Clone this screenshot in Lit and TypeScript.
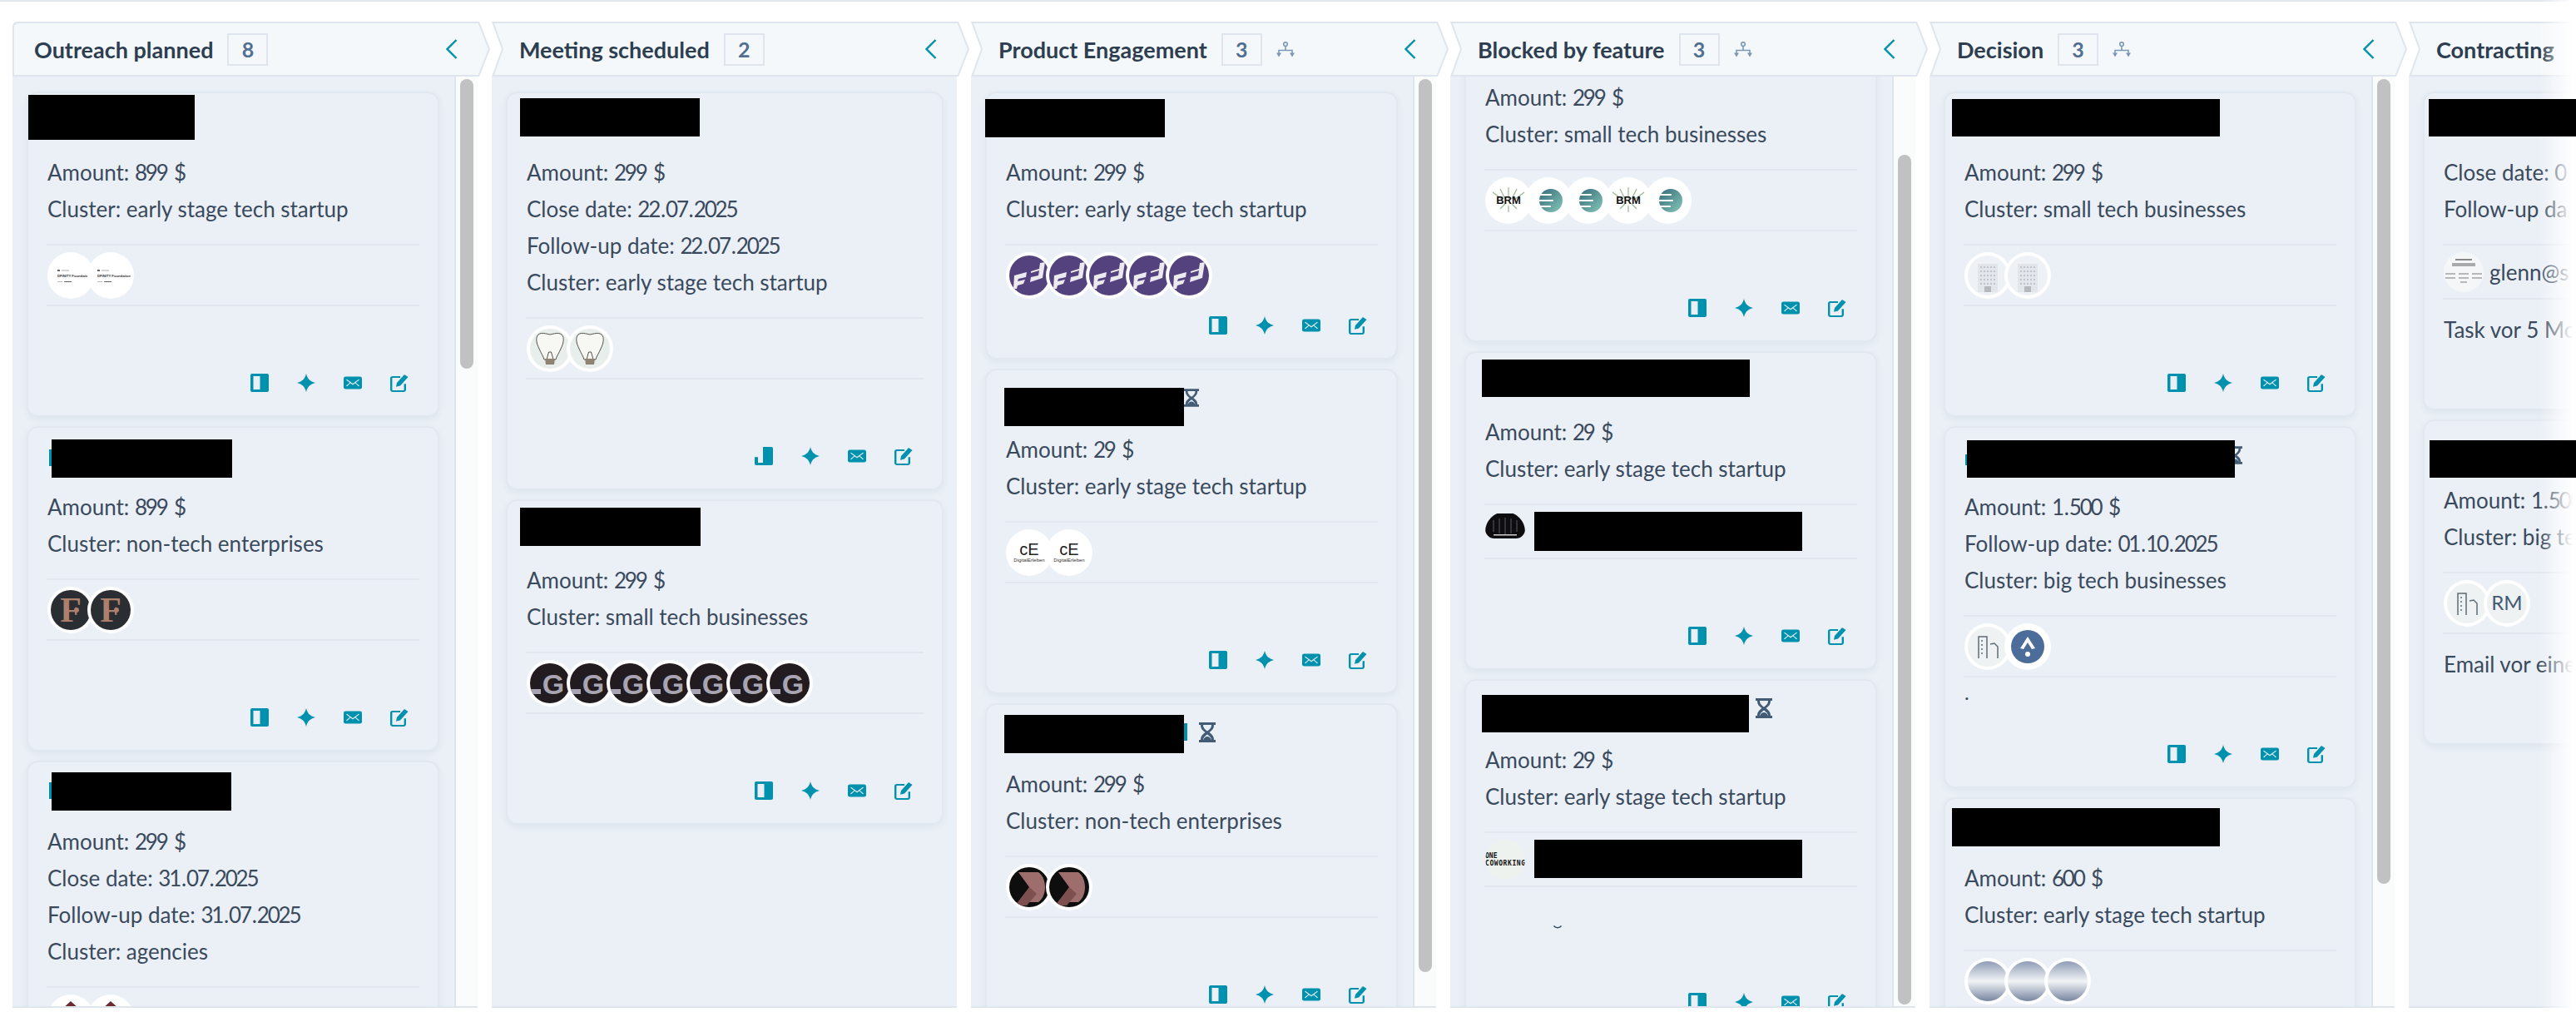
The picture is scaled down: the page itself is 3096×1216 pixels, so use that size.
import { LitElement, html, css, svg, TemplateResult } from "lit";
import { customElement } from "lit/decorators.js";

type Box = { x: number; y: number; w: number; h: number };
type Card = {
  name: Box;
  sliver?: Box;
  glass?: Box;
  lines: string[];
  logos: string[];
  small?: boolean;
  contact?: string;
  cover?: Box;
  compact?: boolean;
  note?: string;
  dot?: boolean;
  mark?: boolean;
  jIcon?: boolean;
};
type Col = {
  title: string;
  count: number;
  hier?: boolean;
  first?: boolean;
  thumb?: { top: number; h: number };
  shift?: number;
  cards: Card[];
};

const logo = (k: string): TemplateResult => {
  const g: Record<string, unknown> = {
    dfinity: svg`<rect width="48" height="48" fill="#fff"/><rect x="8" y="17" width="3" height="2" fill="#666"/><rect x="13" y="17.5" width="9" height="1" fill="#aaa"/><text x="8" y="26" font-size="4.2" font-weight="700" font-family="Liberation Sans" fill="#333">DFINITY Foundation</text><rect x="8" y="31" width="6" height="1" fill="#bbb"/><rect x="16" y="31" width="9" height="1" fill="#666"/>`,
    tooth: svg`<rect width="48" height="48" fill="#e8eeec"/><path d="M10 7c4-3 9-1 14 0 5-1 10-3 14 0 4 4 2 11-1 17-2 5-5 9-6 13H17c-1-4-4-8-6-13C8 18 6 11 10 7z" fill="#f7f7f3" stroke="#55524c" stroke-width="1"/><path d="M20 37l2.500-9h3L28 37" fill="#f7f7f3" stroke="#55524c" stroke-width="1"/><path d="M18 36h12l-1 7H19z" fill="#8f8373"/>`,
    purple: svg`<rect width="48" height="48" fill="#54427f"/><path d="M6 24l15-4-1 6-9 2-1 3 9-2-2 5-7 2-1 4H5z M26 19l10-3 1-7 6-1-3 19-15 5 1-6 9-2 1-6-10 3z" fill="#ece9ef"/>`,
    ff: svg`<rect width="48" height="48" fill="#2a2d31"/><text x="24" y="38" text-anchor="middle" font-size="42" font-weight="700" font-family="Liberation Serif" fill="#ad7f6c">F</text><circle cx="31" cy="24" r="3" fill="#ad7f6c"/>`,
    g: svg`<rect width="48" height="48" fill="#221b20"/><rect x="1" y="31" width="12" height="6" fill="#a9a4b1"/><text x="28" y="37" text-anchor="middle" font-size="34" font-weight="700" font-family="Liberation Sans" fill="#a9a4b1">G</text>`,
    chevron: svg`<rect width="48" height="48" fill="#0e0e0e"/><path d="M11 6h24c6 4 8 12 8 18s-2 14-8 18H13l11-18z" fill="#9d6e6c"/><path d="M24 24L7 46h14l12-14z" fill="#7d504f"/>`,
    brm: svg`<rect width="48" height="48" fill="#fff"/><path d="M24 8v14M14 10l6 12M34 10l-6 12M5 14l12 9M43 14l-12 9M14 34l6-6M34 34l-6-6M24 38v-8" stroke="#97b98d" stroke-width="1.2"/><text x="24" y="28" text-anchor="middle" font-size="13" font-weight="700" font-family="Liberation Sans" fill="#111">BRM</text>`,
    ball: svg`<defs><linearGradient id="tb" x1="0" x2="1" y1="0" y2="1"><stop offset="0" stop-color="#35697a"/><stop offset="1" stop-color="#86c8b8"/></linearGradient></defs><rect width="48" height="48" fill="#fff"/><circle cx="27" cy="24" r="14" fill="url(#tb)"/><path d="M11 17h16M9 24h20M12 31h14" stroke="#fff" stroke-width="2.2" stroke-linecap="round"/>`,
    office: svg`<rect width="48" height="48" fill="#eef1f5"/><rect x="12" y="10" width="24" height="34" fill="#e2e6ea"/><path d="M15 14h18M15 19h18M15 24h18M15 29h18M15 34h18" stroke="#bfc5cc" stroke-width="1.8" stroke-dasharray="2 2"/><rect x="20" y="37" width="8" height="7" fill="#b4b9bf"/>`,
    de: svg`<rect width="48" height="48" fill="#fff"/><text x="24" y="27" text-anchor="middle" font-size="20" font-family="Liberation Sans" fill="#222">cE</text><text x="24" y="35" text-anchor="middle" font-size="6" font-family="Liberation Sans" fill="#333">DigitalErleben</text>`,
    outline: svg`<rect width="48" height="48" fill="#eef2f2"/><path d="M13 38V12h10v26M16 17h2M16 22h2M16 27h2M16 32h2M27 21l5-1 4 4v14" fill="none" stroke="#5f6b76" stroke-width="1.5"/>`,
    rm: svg`<rect width="48" height="48" fill="#eef2f2"/><text x="24" y="32" text-anchor="middle" font-size="24" font-family="Lato" fill="#425b76">RM</text>`,
    blue: svg`<rect width="48" height="48" fill="#fff"/><circle cx="24" cy="24" r="20" fill="#4c6c9a"/><path d="M15 26l9-14 9 14-4 1-5-8-5 8z" fill="#fff"/><circle cx="24" cy="33" r="3" fill="#fff"/>`,
    silver: svg`<defs><linearGradient id="sb" x1="0" x2="0" y1="0" y2="1"><stop offset="0" stop-color="#8e9cb4"/><stop offset=".5" stop-color="#f2f4f7"/><stop offset="1" stop-color="#76859f"/></linearGradient></defs><rect width="48" height="48" fill="url(#sb)"/>`,
    house: svg`<rect width="48" height="48" fill="#fff"/><path d="M4 22L24 4l20 18-5 3L24 11 9 25z" fill="#6b2a30"/>`,
    one: svg`<rect width="48" height="48" fill="#eef2ee"/><text x="0" y="22" font-size="8" font-weight="700" font-family="DejaVu Sans Mono" fill="#111">ONE</text><text x="0" y="31" font-size="8" font-weight="700" font-family="DejaVu Sans Mono" fill="#111" textLength="48">COWORKING</text>`,
    dark: svg`<rect x="0" y="2" width="48" height="30" rx="11" fill="#0d0d10"/><path d="M10 10v14M17 8v18M24 7v20M31 8v18M38 10v14" stroke="#33333b" stroke-width="2"/><rect x="10" y="27" width="28" height="1.5" fill="#cfcfcf"/>`,
    doc: svg`<rect width="48" height="48" fill="#f4f6f8"/><rect x="14" y="8" width="20" height="2" fill="#888"/><rect x="10" y="13" width="28" height="4" fill="#aaa"/><path d="M2 26h12M18 26h12M34 26h12M2 31h12M18 31h12M34 31h12M20 36h8" stroke="#b8b8b8" stroke-width="2"/>`,
  };
  return html`<svg viewBox="0 0 48 48" class="logo">${g[k]}</svg>`;
};

const ic = {
  panel: html`<svg viewBox="0 0 22 25" preserveAspectRatio="none" class="ic"><path fill-rule="evenodd" d="M2 0h18a2 2 0 0 1 2 2v21a2 2 0 0 1-2 2H2a2 2 0 0 1-2-2V2a2 2 0 0 1 2-2zm1.500 3.500v18h8v-18z"/></svg>`,
  j: html`<svg viewBox="0 0 22 25" preserveAspectRatio="none" class="ic"><path d="M10 0h10a2 2 0 0 1 2 2v21a2 2 0 0 1-2 2H2a2 2 0 0 1-2-2v-9h4v7.500h6z"/></svg>`,
  star: html`<svg viewBox="0 0 22 25" preserveAspectRatio="none" class="ic"><path d="M11 0c1.500 7 4.500 10.500 11 12.500-6.500 2-9.500 5.500-11 12.500-1.500-7-4.500-10.500-11-12.500C6.500 10.500 9.500 7 11 0z"/></svg>`,
  mail: html`<svg viewBox="0 0 22 25" preserveAspectRatio="none" class="ic"><rect x="0" y="4" width="22" height="17" rx="2.500"/><path d="M3.500 8l7.500 6.500 7.500-6.500M3.500 17l4.500-4.500M18.500 17L14 12.500" fill="none" stroke="#eaf0f6" stroke-width="1.200"/></svg>`,
  edit: html`<svg viewBox="0 0 22 25" preserveAspectRatio="none" class="ic"><path d="M12 4.500H3a1.800 1.800 0 0 0-1.800 1.800V22A1.800 1.800 0 0 0 3 23.800h13a1.800 1.800 0 0 0 1.800-1.800v-8" fill="none" stroke="#0091ae" stroke-width="2.400"/><path d="M8 12.500L17 1l4.500 3.500-9.500 12-5 1.500z"/></svg>`,
};

const glassIcon = html`<svg viewBox="0 0 20 24" class="glass"><path d="M0 0h20v3h-2c0 5-3 7-5.500 9 2.500 2 5.500 4 5.500 9h2v3H0v-3h2c0-5 3-7 5.500-9C5 10 2 8 2 3H0zm5 3c0 4 3 6 5 7.500C12 9 15 7 15 3zm5 11.500C8 16 5 18 5 21h10c0-3-3-5-5-6.500z"/><path d="M5 21.500c.5-3 3-4.500 5-4.500s4.500 1.500 5 4.500z"/></svg>`;

const hierIcon = html`<svg viewBox="0 0 22 19" class="hier"><circle cx="11" cy="3" r="2.300" fill="none" stroke="#7c98b6" stroke-width="1.600"/><path d="M11 5.500v5M3 15v-4.500h16V15" fill="none" stroke="#7c98b6" stroke-width="1.600"/><path d="M0 13.500h6L3 18.500zM16 13.500h6l-3 5z" fill="#7c98b6"/></svg>`;

const rep = (k: string, n: number) => Array(n).fill(k) as string[];

const COLS: Col[] = [
  {
    title: "Outreach planned", count: 8, first: true, thumb: { top: 3, h: 348 },
    cards: [
      { name: { x: -23, y: 2, w: 200, h: 54 }, lines: ["Amount: 899 $", "Cluster: early stage tech startup"], logos: rep("dfinity", 2) },
      { name: { x: 5, y: 14, w: 217, h: 46 }, sliver: { x: 2, y: 26, w: 3, h: 20 }, lines: ["Amount: 899 $", "Cluster: non-tech enterprises"], logos: rep("ff", 2) },
      { name: { x: 5, y: 12, w: 216, h: 46 }, sliver: { x: 2, y: 24, w: 3, h: 20 }, lines: ["Amount: 299 $", "Close date: 31.07.2025", "Follow-up date: 31.07.2025", "Cluster: agencies"], logos: rep("house", 2) },
    ],
  },
  {
    title: "Meeting scheduled", count: 2,
    cards: [
      { name: { x: -8, y: 6, w: 216, h: 46 }, lines: ["Amount: 299 $", "Close date: 22.07.2025", "Follow-up date: 22.07.2025", "Cluster: early stage tech startup"], logos: rep("tooth", 2), jIcon: true },
      { name: { x: -8, y: 8, w: 217, h: 46 }, lines: ["Amount: 299 $", "Cluster: small tech businesses"], logos: rep("g", 7) },
    ],
  },
  {
    title: "Product Engagement", count: 3, hier: true, thumb: { top: 3, h: 1073 },
    cards: [
      { name: { x: -25, y: 7, w: 216, h: 46 }, lines: ["Amount: 299 $", "Cluster: early stage tech startup"], logos: rep("purple", 5), compact: true },
      { name: { x: -2, y: 21, w: 216, h: 46 }, glass: { x: 214, y: 21, w: 18, h: 24 }, lines: ["Amount: 29 $", "Cluster: early stage tech startup"], logos: rep("de", 2) },
      { name: { x: -2, y: 12, w: 216, h: 46 }, sliver: { x: 214, y: 22, w: 4, h: 21 }, glass: { x: 232, y: 21, w: 20, h: 24 }, lines: ["Amount: 299 $", "Cluster: non-tech enterprises"], logos: rep("chevron", 2) },
    ],
  },
  {
    title: "Blocked by feature", count: 3, hier: true, thumb: { top: 94, h: 1021 }, shift: -90,
    cards: [
      { name: { x: -2, y: 8, w: 216, h: 46 }, lines: ["Amount: 299 $", "Cluster: small tech businesses"], logos: ["brm", "ball", "ball", "brm", "ball"] },
      { name: { x: -4, y: 8, w: 322, h: 45 }, lines: ["Amount: 29 $", "Cluster: early stage tech startup"], logos: ["dark"], small: true, cover: { x: 59, y: 0, w: 322, h: 47 } },
      { name: { x: -4, y: 17, w: 321, h: 45 }, glass: { x: 325, y: 21, w: 20, h: 24 }, lines: ["Amount: 29 $", "Cluster: early stage tech startup"], logos: ["one"], small: true, cover: { x: 59, y: 0, w: 322, h: 46 }, mark: true },
    ],
  },
  {
    title: "Decision", count: 3, hier: true, thumb: { top: 3, h: 967 },
    cards: [
      { name: { x: -15, y: 7, w: 322, h: 45 }, lines: ["Amount: 299 $", "Cluster: small tech businesses"], logos: rep("office", 2) },
      { name: { x: 3, y: 15, w: 322, h: 45 }, sliver: { x: 1, y: 32, w: 2, h: 13 }, glass: { x: 316, y: 21, w: 18, h: 24 }, lines: ["Amount: 1.500 $", "Follow-up date: 01.10.2025", "Cluster: big tech businesses"], logos: ["outline", "blue"], dot: true },
      { name: { x: -15, y: 11, w: 322, h: 46 }, lines: ["Amount: 600 $", "Cluster: early stage tech startup"], logos: rep("silver", 3) },
    ],
  },
  {
    title: "Contracting", count: 4, hier: true,
    cards: [
      { name: { x: -18, y: 7, w: 500, h: 45 }, lines: ["Close date: 0", "Follow-up da"], logos: ["doc"], small: true, contact: "glenn@s", note: "Task vor 5 Mo" },
      { name: { x: -17, y: 23, w: 500, h: 45 }, lines: ["Amount: 1.500 $", "Cluster: big tech businesses"], logos: ["outline", "rm"], note: "Email vor eine" },
    ],
  },
];

const digits = (s: string) =>
  s.split(/(\d+)/).map((p, i) => (i % 2 ? html`<span class="d">${p}</span>` : p));

@customElement("app-root")
export class AppRoot extends LitElement {
  static styles = css`
    :host { display: block; position: relative; width: 3096px; height: 1216px; overflow: hidden; background: #fff; font-family: "Lato", "Liberation Sans", sans-serif; color: #33475b; }
    * { box-sizing: border-box; }
    .board { display: flex; height: 1216px; padding: 24px 0 0 15px; border-top: 2px solid #e3e8ee; }
    .col { flex: 0 0 559px; width: 559px; min-width: 0; margin-right: 17px; height: 1185px; display: flex; flex-direction: column; }
    .head { width: 574px; height: 66px; flex: none; padding: 2px; background: #dfe5ec; clip-path: polygon(0 0, 561px 0, 574px 33px, 561px 66px, 0 66px, 12px 33px); }
    .head-in { width: 570px; height: 62px; background: #f5f8fa; display: flex; align-items: center; padding-left: 31px; padding-right: 37px; clip-path: polygon(.9px 0, 557.700px 0, 569.900px 31px, 557.700px 62px, .9px 62px, 12.100px 31px); }
    .first .head { clip-path: polygon(0 0, 561px 0, 574px 33px, 561px 66px, 0 66px); border-radius: 6px 0 0 0; }
    .first .head-in { clip-path: polygon(0 0, 557.700px 0, 569.900px 31px, 557.700px 62px, 0 62px); padding-left: 24px; border-radius: 5px 0 0 0; }
    .t { font-weight: 700; font-size: 27px; color: #2d3e50; white-space: nowrap; }
    .n { margin-left: 17px; width: 49px; height: 39px; flex: none; border: 2px solid #dfe5ec; display: flex; align-items: center; justify-content: center; font-weight: 700; font-size: 25px; color: #516f90; }
    .hier { width: 22px; height: 19px; margin-left: 17px; flex: none; }
    .chev { width: 14px; height: 24px; margin-left: auto; flex: none; fill: none; stroke: #0091ae; stroke-width: 2.4px; }
    .body { flex: 1; min-height: 0; display: flex; background: #eaf0f6; border-bottom: 2px solid #dfe5ec; overflow: hidden; }
    .list { flex: 1; min-width: 0; padding: 18px 16px 0 17px; overflow: hidden; }
    .has-track .list { padding-right: 18px; }
    .cards { display: flex; flex-direction: column; gap: 11px; }
    .track { flex: 0 0 28px; background: #fafbfb; border-left: 2px solid #dfe5ec; padding-left: 5px; }
    .thumb { width: 16px; background: #c1c1c1; border-radius: 8px; }
    .card { flex: none; border: 2px solid #e2e8ef; border-radius: 14px; background: #ebf0f7; padding: 0 22px 28px 23px; box-shadow: 0 3px 8px rgba(45, 62, 80, .06); }
    .title { position: relative; height: 73px; }
    .redact { position: absolute; background: #000; z-index: 2; }
    .sliver { position: absolute; background: #0091ae; }
    .gl { position: absolute; }
    .glass { display: block; width: 100%; height: 100%; fill: #425b76; }
    .line { font-size: 26px; line-height: 44px; height: 44px; white-space: nowrap; color: #3a4a5c; }
    .d { letter-spacing: -2.2px; margin-right: 1.8px; }
    .div { height: 2px; background: #e1e7ee; margin-left: -1px; }
    .lines { margin-bottom: 20px; }
    .row { position: relative; display: flex; align-items: center; padding: 8px 0 7px; }
    .av { width: 56px; height: 56px; flex: none; border-radius: 50%; background: #fff; padding: 4px; margin-right: -8px; position: relative; }
    .logo { display: block; width: 100%; height: 100%; border-radius: 50%; }
    .small .av { width: 48px; height: 48px; padding: 0; background: transparent; }
    .contact { margin-left: 15px; font-size: 26px; color: #3a4a5c; }
    .foot { height: 81px; }
    .note { padding-top: 14px; font-size: 26px; line-height: 44px; white-space: nowrap; color: #3a4a5c; }
    .dotnote { font-size: 24px; line-height: 36px; color: #33475b; }
    .mark { display: block; width: 10px; height: 4px; margin: 46px 0 0 82px; fill: none; stroke: #33475b; stroke-width: 1.500px; }
    .compact { height: 14px; }
    .actions { display: flex; justify-content: flex-end; gap: 34px; padding-right: 13px; }
    .ic { width: 22px; height: 22px; fill: #0091ae; flex: none; display: block; }
    .fade { position: absolute; top: 0; right: 0; z-index: 1; width: 44px; height: 1216px; background: linear-gradient(90deg, rgba(255,255,255,0), #fff 92%); }
  `;

  private card(c: Card) {
    return html`<div class="card">
      <div class="title">
        ${c.sliver ? html`<div class="sliver" style="left:${c.sliver.x}px;top:${c.sliver.y}px;width:${c.sliver.w}px;height:${c.sliver.h}px"></div>` : ""}
        ${c.glass ? html`<div class="gl" style="left:${c.glass.x}px;top:${c.glass.y}px;width:${c.glass.w}px;height:${c.glass.h}px">${glassIcon}</div>` : ""}
        <div class="redact" style="left:${c.name.x}px;top:${c.name.y}px;width:${c.name.w}px;height:${c.name.h}px"></div>
      </div>
      <div class="lines">${c.lines.map((l) => html`<div class="line">${digits(l)}</div>`)}</div>
      <div class="div"></div>
      <div class="row ${c.small ? "small" : ""}">
        ${c.logos.map((k) => html`<div class="av">${logo(k)}</div>`)}
        ${c.contact ? html`<span class="contact">${c.contact}</span>` : ""}
        ${c.cover ? html`<div class="redact" style="left:${c.cover.x}px;top:${c.cover.y + 8}px;width:${c.cover.w}px;height:${c.cover.h}px"></div>` : ""}
      </div>
      ${c.compact
        ? html`<div class="compact"></div>`
        : html`<div class="div"></div>
            <div class="foot">
              ${c.note ? html`<div class="note">${c.note}</div>` : ""}
              ${c.dot ? html`<div class="dotnote">.</div>` : ""}
              ${c.mark ? html`<svg class="mark" viewBox="0 0 10 4"><path d="M.5.5c2 3 7 3 9 0"/></svg>` : ""}
            </div>`}
      <div class="actions">${c.jIcon ? ic.j : ic.panel}${ic.star}${ic.mail}${ic.edit}</div>
    </div>`;
  }

  render() {
    return html`<div class="board">
        ${COLS.map(
          (col) => html`<section class="col ${col.first ? "first" : ""} ${col.thumb ? "has-track" : ""}">
            <div class="head"><div class="head-in">
              <span class="t">${col.title}</span>
              ${col.title === "Contracting" ? "" : html`<span class="n">${col.count}</span>`}
              ${col.hier && col.title !== "Contracting" ? hierIcon : ""}
              <svg class="chev" viewBox="0 0 14 24"><path d="M12.500 1L1.500 12l11 11"/></svg>
            </div></div>
            <div class="body">
              <div class="list"><div class="cards" style="margin-top:${col.shift ?? 0}px">${col.cards.map((c) => this.card(c))}</div></div>
              ${col.thumb ? html`<div class="track"><div class="thumb" style="margin-top:${col.thumb.top}px;height:${col.thumb.h}px"></div></div>` : ""}
            </div>
          </section>`
        )}
      </div>
      <div class="fade"></div>`;
  }
}
